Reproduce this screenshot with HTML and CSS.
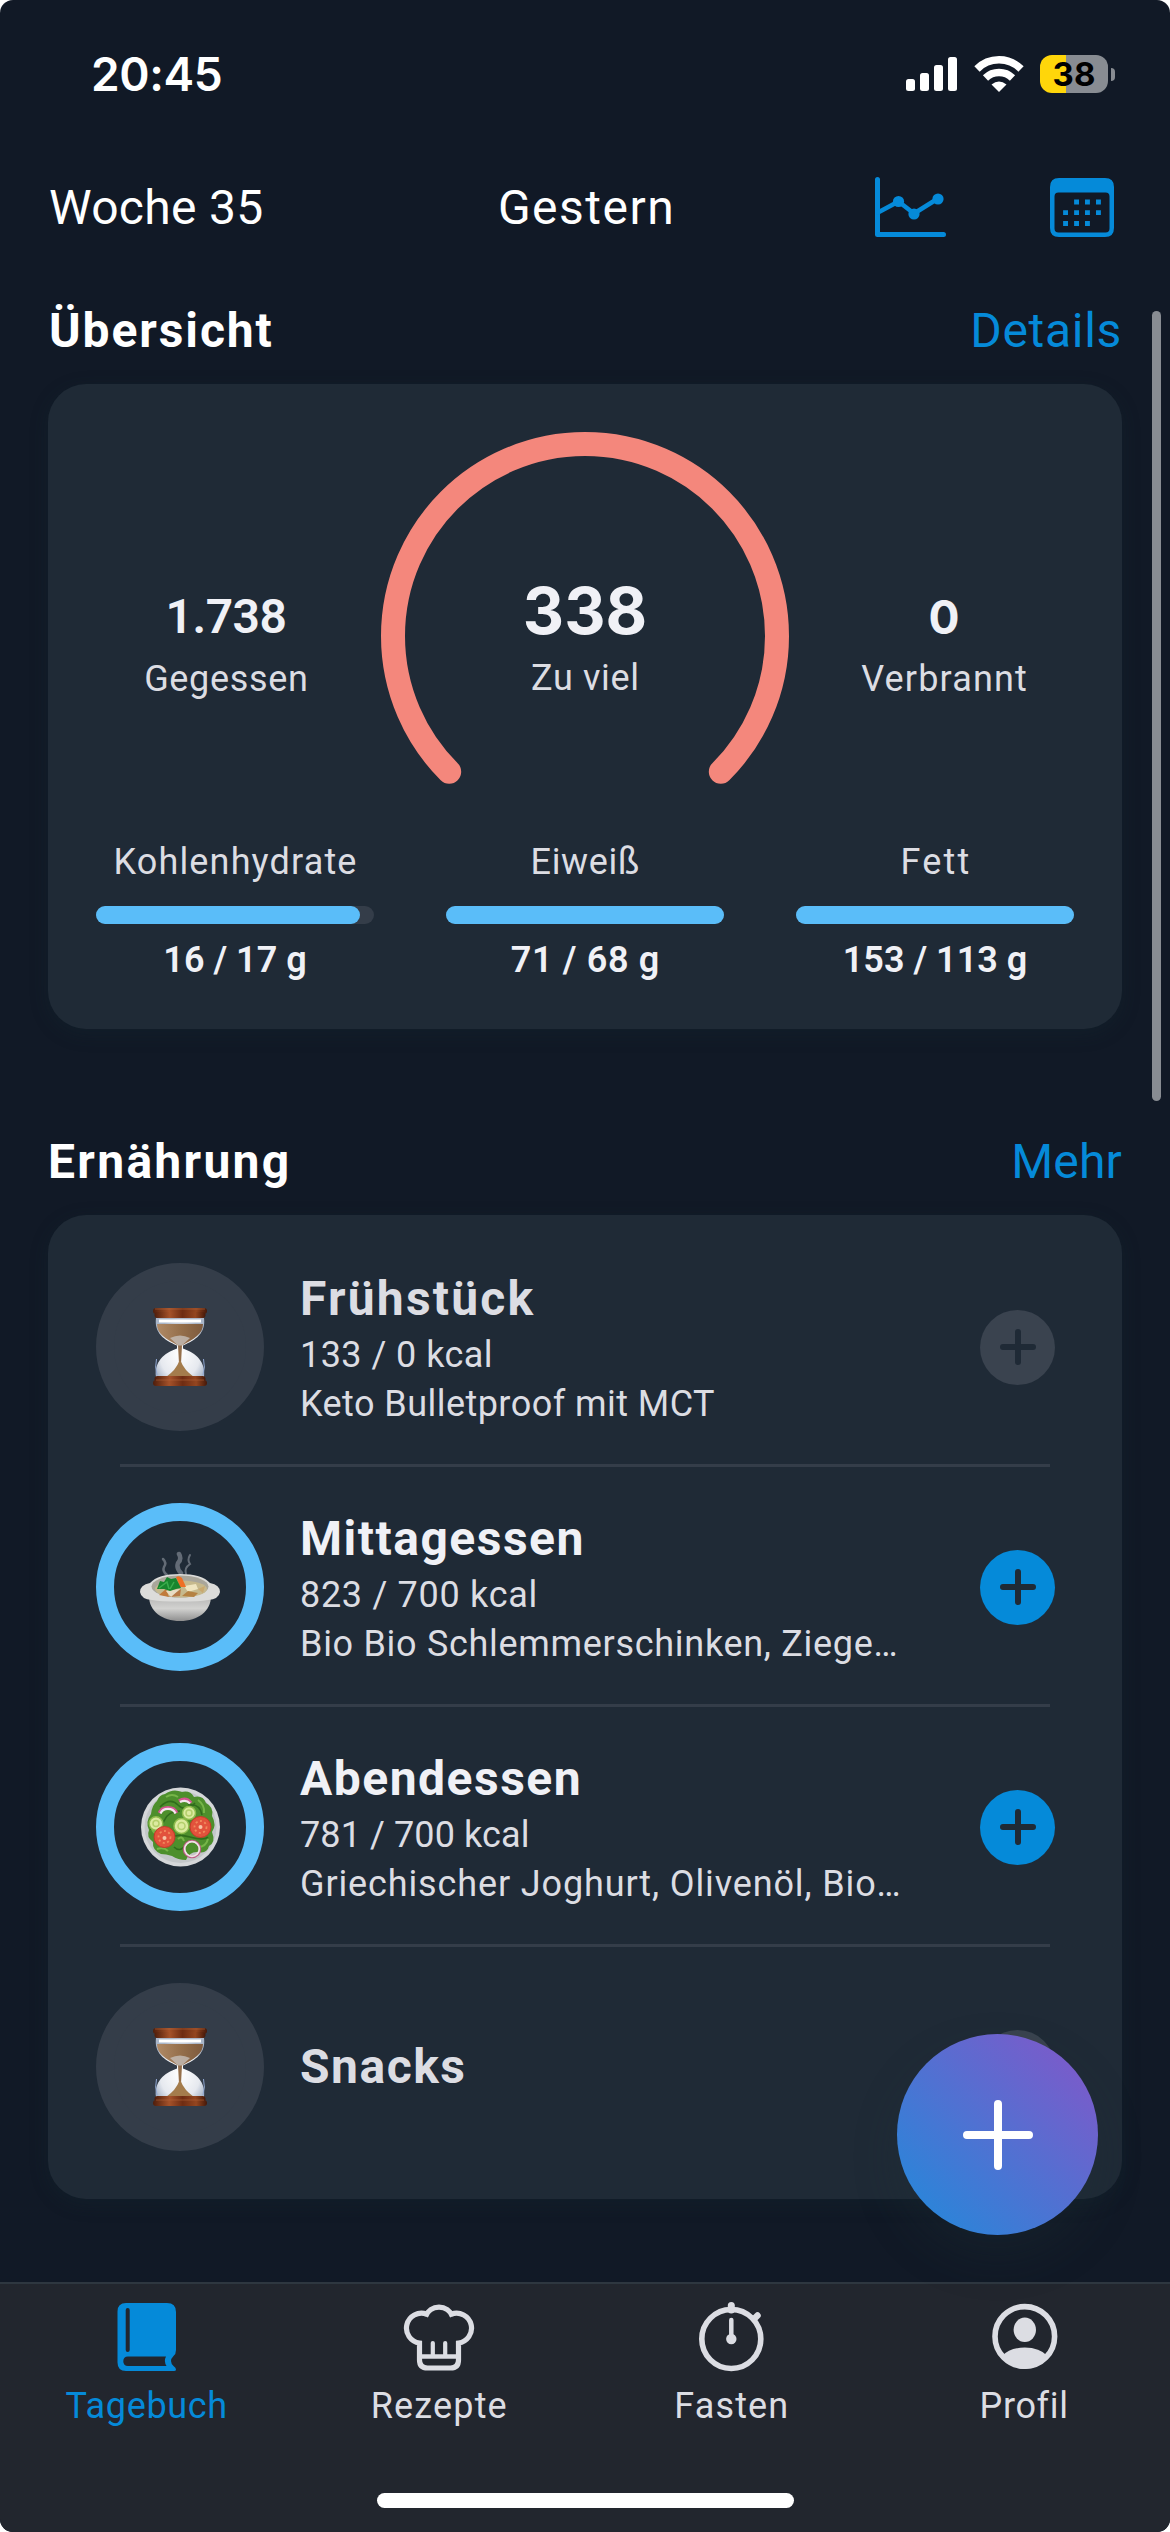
FILE: index.html
```html
<!DOCTYPE html>
<html lang="de">
<head>
<meta charset="utf-8">
<title>Tagebuch</title>
<link rel="stylesheet" href="styles.css">
</head>
<body>
<svg class="defs" width="0" height="0" aria-hidden="true">
  <defs>
    <linearGradient id="wood" x1="0" x2="1"><stop offset="0" stop-color="#4e1d0b"/><stop offset=".3" stop-color="#a5522a"/><stop offset=".55" stop-color="#6e2c12"/><stop offset=".8" stop-color="#944620"/><stop offset="1" stop-color="#451808"/></linearGradient>
    <radialGradient id="glass" cx=".5" cy=".6" r=".6"><stop offset="0" stop-color="#ffffff"/><stop offset=".7" stop-color="#e6e9ef"/><stop offset="1" stop-color="#a9b6c9"/></radialGradient>
    <linearGradient id="sand" x1="0" x2="1"><stop offset="0" stop-color="#b08a66"/><stop offset=".5" stop-color="#96704c"/><stop offset="1" stop-color="#7d5a3d"/></linearGradient>
    <linearGradient id="bowl" x1="0" x2="0" y1="0" y2="1"><stop offset="0" stop-color="#b5b5b4"/><stop offset=".5" stop-color="#d2d2d0"/><stop offset="1" stop-color="#8f8f8f"/></linearGradient>
    <symbol id="hourglass" viewBox="0 0 56 80">
      <path d="M4 11H52C54 26 44 33 31 38.500V41.500C44 46 54 55 52 70H4C2 55 12 46 25 41.500V38.500C12 33 2 26 4 11Z" fill="url(#glass)"/>
      <path d="M5 17H51C51 27 42 32 30 38.500L28.700 62H27.300L26 38.500C14 32 5 27 5 17Z" fill="url(#sand)"/>
      <path d="M18 31Q28 26 38 31L30 38.500H26Z" fill="#c9c4c0" opacity=".75"/>
      <path d="M14 70Q24 63 27.300 54H28.700Q32 63 42 70Z" fill="#a47c4c"/>
      <path d="M7 14H49" stroke="#fff" stroke-width="3"/>
      <path d="M4.500 52Q2.500 60 5 68M51.500 52Q53.500 60 51 68" fill="none" stroke="#8fa6d0" stroke-width="1"/>
      <rect x="1" y="1" width="54" height="6" rx="3" fill="url(#wood)"/>
      <rect x="2.500" y="5" width="51" height="6" rx="3" fill="url(#wood)"/>
      <rect x="2.500" y="69" width="51" height="6" rx="3" fill="url(#wood)"/>
      <rect x="1" y="73" width="54" height="6" rx="3" fill="url(#wood)"/>
      <path d="M3 2H53M4 73H52" stroke="#b96a40" stroke-width=".8" opacity=".7"/>
    </symbol>
    <symbol id="plus" viewBox="0 0 36 36"><path d="M18 3V33M3 18H33" fill="none" stroke="currentColor" stroke-width="6" stroke-linecap="round"/></symbol>
  </defs>
</svg>

<div class="phone">
  <div class="status">
    <span class="status__time">20:45</span>
    <span class="status__icons">
      <svg width="52" height="36" viewBox="0 0 52 36" fill="#fff"><rect x="0" y="23" width="9" height="12" rx="2.500"/><rect x="14" y="17" width="9" height="18" rx="2.500"/><rect x="28" y="9" width="9" height="26" rx="2.500"/><rect x="42" y="1" width="9" height="34" rx="2.500"/></svg>
      <svg width="50" height="37" viewBox="0 0 50 37" fill="none" stroke="#fff" stroke-width="7.500"><path d="M3 13A31 31 0 0 1 47 13"/><path d="M11.500 22A19.500 19.500 0 0 1 38.500 22"/><path d="M25 36L17.500 28.500Q25 22.500 32.500 28.500Z" fill="#fff" stroke="none"/></svg>
      <span class="battery"><span class="battery__body">38</span><span class="battery__nub"></span></span>
    </span>
  </div>

  <header class="nav">
    <span class="nav__week">Woche 35</span>
    <span class="track-m">Gestern</span>
    <span class="nav__icons">
      <svg width="72" height="62" viewBox="0 0 72 62" fill="none" stroke="currentColor" stroke-linecap="round" stroke-linejoin="round"><path d="M2.500 2.500V57.500H68.500" stroke-width="5"/><path d="M3 35.500L23.500 24.500L39 36.500L63 21.500" stroke-width="4.500"/><g fill="currentColor" stroke="none"><circle cx="23.500" cy="24.500" r="5.600"/><circle cx="39" cy="37" r="5.600"/><circle cx="63" cy="22" r="5.600"/></g></svg>
      <svg width="64" height="60" viewBox="0 0 64 60"><path fill="currentColor" fill-rule="evenodd" d="M9 1H55Q64 1 64 10V51Q64 60 55 60H9Q0 60 0 51V10Q0 1 9 1ZM8.500 15.500Q4.500 15.500 4.500 19.500V51.500Q4.500 55.500 8.500 55.500H55.500Q59.500 55.500 59.500 51.500V19.500Q59.500 15.500 55.500 15.500Z"/><path d="M26.500 25H26.600M37.400 25H37.500M48.400 25H48.500M15.500 35.700H15.600M26.500 35.700H26.600M37.400 35.700H37.500M48.400 35.700H48.500M15.500 46.500H15.600M26.500 46.500H26.600M37.400 46.500H37.500" stroke="currentColor" stroke-width="4.800" stroke-linecap="square"/></svg>
    </span>
  </header>

  <main>
    <div class="head"><h2>Übersicht</h2><a>Details</a></div>
    <section class="card overview">
      <div class="energy">
        <div class="stat"><b class="track-tight">1.738</b><span class="track-s">Gegessen</span></div>
        <div class="gauge">
          <svg width="408" height="352" viewBox="0 0 408 352"><path d="M68.200 339.800A192 192 0 1 1 339.800 339.800" fill="none" stroke="#f4877c" stroke-width="24" stroke-linecap="round"/></svg>
          <div class="stat stat--main"><b>338</b><span class="track-s">Zu viel</span></div>
        </div>
        <div class="stat stat--burned"><b>0</b><span class="track-m">Verbrannt</span></div>
      </div>
      <div class="macros">
        <div class="macro"><span class="track-m">Kohlenhydrate</span><div class="bar"><div class="bar__fill" style="width:95%"></div></div><b>16 / 17 g</b></div>
        <div class="macro"><span class="track-s">Eiweiß</span><div class="bar"><div class="bar__fill" style="width:100%"></div></div><b class="track-s">71 / 68 g</b></div>
        <div class="macro"><span class="track-l">Fett</span><div class="bar"><div class="bar__fill" style="width:100%"></div></div><b>153 / 113 g</b></div>
      </div>
    </section>

    <div class="head head--next"><h2>Ernährung</h2><a>Mehr</a></div>
    <section class="card meals">
      <article class="meal meal--off">
        <div class="meal__icon"><svg width="56" height="80"><use href="#hourglass"/></svg></div>
        <div class="meal__text"><h3>Frühstück</h3><p>133 / 0 kcal</p><p>Keto Bulletproof mit MCT</p></div>
        <div class="add"><svg width="36" height="36"><use href="#plus"/></svg></div>
      </article>
      <article class="meal">
        <div class="meal__icon">
          <svg width="80" height="72" viewBox="0 0 80 72">
            <g fill="none" stroke="#c9ced6" stroke-linecap="round" opacity=".4"><path d="M23 8Q27 12 24 16Q22 20 27 24" stroke-width="2.500"/><path d="M39 3Q42 8 38 12Q36 17 41 22" stroke-width="4.500"/><path d="M50 4Q47 9 50 13Q44 17 46 23" stroke-width="2"/></g>
            <path d="M9 45H71C71 60 58 70 40 70S9 60 9 45Z" fill="url(#bowl)"/>
            <path d="M10 32Q18 23 40 23T70 32Q80 34 80 41Q79 48 68 49Q60 50.500 40 50.500T12 49Q1 48 0 41Q0 34 10 32Z" fill="#dcdcda"/>
            <ellipse cx="40" cy="35.500" rx="28.500" ry="11" fill="#a9a69b"/>
            <ellipse cx="41" cy="38" rx="26" ry="8.500" fill="#c6b98d"/>
            <path d="M44 35L56 33L58 38L48 41Z" fill="#efe5c0"/><path d="M19 44L26 38L29 46Z" fill="#c07a3a"/><path d="M29 46L41 38L40 45Z" fill="#b77a47"/><path d="M26 40L40 38L31 46Z" fill="#e8dcc4"/><path d="M42 45L48 40L58 42L54 46Z" fill="#b58243"/><path d="M58 38L65 35L63 42Z" fill="#c9a970"/>
            <path d="M36 26Q39 24 42 27L46 36H40Z" fill="#ee6f25"/>
            <path d="M17 38L20 30L24 31L27 26L31 28L36 27L41 37L36 38L30 40L24 38Z" fill="#17852e"/><path d="M19 37L27 31L29 38M30 38L34 31" fill="none" stroke="#3aad4d" stroke-width="1.500"/>
          </svg>
        </div>
        <div class="meal__text"><h3 class="track-title-s">Mittagessen</h3><p>823 / 700 kcal</p><p>Bio Bio Schlemmerschinken, Ziege…</p></div>
        <div class="add"><svg width="36" height="36"><use href="#plus"/></svg></div>
      </article>
      <article class="meal">
        <div class="meal__icon">
          <svg width="80" height="80" viewBox="0 0 80 80">
            <circle cx="40.500" cy="40" r="39.500" fill="#d5d7d9"/><circle cx="40.500" cy="40" r="36" fill="#c3c7c9"/>
            <path d="M25 7Q33 1 42 5Q50 3 54 10Q63 8 66 16Q74 20 72 29Q77 38 72 45Q76 55 69 59Q67 67 58 65Q50 64 46 73Q38 73 32 69Q26 67 21 67Q12 63 13 55Q6 50 9 43Q5 35 11 27Q12 18 17 14Q19 8 25 7Z" fill="#4d8f2c"/>
            <g fill="none" stroke="#2f6c1c" stroke-width="1.600"><path d="M20 20Q30 10 38 18T55 16M48 18Q60 16 62 28M10 42Q20 44 24 34T40 24M30 52Q36 46 50 50T68 50M34 60Q40 66 46 58M55 44Q62 54 70 42"/></g>
            <g fill="none" stroke="#76b548" stroke-width="2"><path d="M26 10Q32 6 38 10M58 13Q65 18 64 26M10 36Q12 46 18 48M17 62Q24 60 28 64M38 52Q42 48 44 54M58 60Q66 60 68 52"/></g>
            <path d="M19.500 26A9 8 0 0 1 36.500 26M39 14Q46 10 51 16" fill="none" stroke="#d35591" stroke-width="3.500"/><path d="M20.500 26.500A8 7 0 0 1 35.500 26.500M40 15Q46 12 50 16.500" fill="none" stroke="#f3e8ef" stroke-width="2.200"/>
            <circle cx="52" cy="62" r="8" fill="none" stroke="#bf5c86" stroke-width="2.500"/><circle cx="52" cy="62" r="7.300" fill="none" stroke="#eee6e6" stroke-width="1.700"/>
            <g fill="#dceba0" stroke="#8dbb4c" stroke-width="1.500"><circle cx="49" cy="26" r="6.500"/><circle cx="16" cy="36.500" r="6.800"/><circle cx="41.500" cy="39" r="7.500"/></g>
            <g fill="none" stroke="#b4cf6c" stroke-width="1.500"><circle cx="16" cy="36.500" r="3"/><circle cx="41.500" cy="39" r="3.500"/><circle cx="49" cy="26" r="3"/></g>
            <g fill="#e2523c" stroke="#c43a2a" stroke-width="1"><circle cx="24.500" cy="50" r="10.500"/><circle cx="60.500" cy="40" r="10.500"/></g>
            <g fill="none" stroke="#f08a5c" stroke-width="1.800" stroke-dasharray="2 2.500"><circle cx="24.500" cy="50" r="6"/><circle cx="60.500" cy="40" r="6"/></g>
            <circle cx="24.500" cy="51" r="2" fill="#f6c3a4"/><circle cx="60.500" cy="40" r="2" fill="#f6c3a4"/>
          </svg>
        </div>
        <div class="meal__text"><h3 class="track-title-s">Abendessen</h3><p class="track-none">781 / 700 kcal</p><p class="track-s">Griechischer Joghurt, Olivenöl, Bio…</p></div>
        <div class="add"><svg width="36" height="36"><use href="#plus"/></svg></div>
      </article>
      <article class="meal meal--off">
        <div class="meal__icon"><svg width="56" height="80"><use href="#hourglass"/></svg></div>
        <div class="meal__text meal__text--single"><h3 class="track-title-s">Snacks</h3></div>
        <div class="add"><svg width="36" height="36"><use href="#plus"/></svg></div>
      </article>
    </section>
  </main>

  <nav class="tabs">
    <a class="tab tab--active"><svg width="72" height="72" viewBox="0 0 72 72"><path fill="currentColor" fill-rule="evenodd" d="M16 2H57Q66 2 66 11V49Q66 53 63.500 55Q58.500 60 63.500 65Q66 66.500 66 68.500Q66 70 64 70H16Q7.500 70 7.500 61.500V10.500Q7.500 2 16 2ZM17.700 7Q15.700 7 15.700 9V49Q15.700 51 17.700 51Q19.700 51 19.700 49V9Q19.700 7 17.700 7ZM18 55.500Q13.300 55.500 13.300 60.200Q13.300 65 18 65H56.500Q53.500 60 56 55.500Z"/></svg><span class="track-s">Tagebuch</span></a>
    <a class="tab"><svg width="72" height="72" viewBox="0 0 72 72" fill="none" stroke="currentColor" stroke-width="5.200"><path d="M22.500 15.500A14.400 14.400 0 0 1 49.500 15.500"/><path d="M23.500 13A15 15 0 1 0 16.500 42V59Q16.500 67 24.500 67H47.500Q55.500 67 55.500 59V42A15 15 0 1 0 48.500 13"/><path d="M16.500 55.500H55.500" stroke-width="4.500"/><path d="M29.800 42V55M42.200 42V55" stroke-width="4.200" stroke-linecap="round"/></svg><span class="track-m">Rezepte</span></a>
    <a class="tab"><svg width="72" height="72" viewBox="0 0 72 72" fill="none" stroke="currentColor" stroke-linecap="round"><circle cx="36.300" cy="38" r="29.500" stroke-width="5.600"/><path d="M36.300 4.500V9" stroke-width="7"/><path d="M60 17L62.500 14.500" stroke-width="6.500"/><path d="M36.300 19V38" stroke-width="4.500"/><circle cx="36.300" cy="38" r="5.200" fill="currentColor" stroke="none"/></svg><span class="track-m">Fasten</span></a>
    <a class="tab"><svg width="72" height="72" viewBox="0 0 72 72"><circle cx="36.800" cy="35.400" r="29.800" fill="none" stroke="currentColor" stroke-width="5.600"/><ellipse cx="36.800" cy="28.800" rx="11.200" ry="12.200" fill="currentColor"/><path fill="currentColor" d="M14 55Q22 46.500 36.800 46.500T59.600 55Q50 68 36.800 68T14 55Z"/></svg><span class="track-s">Profil</span></a>
    <div class="home"></div>
  </nav>

  <div class="fab"><svg width="72" height="72" viewBox="0 0 72 72"><path d="M36 5V67M5 36H67" fill="none" stroke="#fff" stroke-width="8" stroke-linecap="round"/></svg></div>
  <div class="scrollbar"></div>
</div>
</body>
</html>
```
FILE: styles.css
```css
* { box-sizing: border-box; }
body { margin: 0; background: #fff; font-family: Roboto, "Liberation Sans", sans-serif; font-size: 36px; line-height: 44px; color: #dcdde3; }
h2, h3, p { margin: 0; font-size: inherit; font-weight: inherit; }
svg { display: block; flex: none; }
.defs { position: absolute; }

.phone { position: relative; display: flex; flex-direction: column; width: 1170px; height: 2532px; background: #111926; border-radius: 13px; overflow: hidden; }

.status { display: flex; align-items: center; justify-content: space-between; height: 148px; padding: 0 55px 0 91px; }
.status__time { font-family: Inter, sans-serif; font-size: 46px; font-weight: 600; letter-spacing: -.4px; color: #fff; }
.status__icons { display: flex; align-items: center; gap: 16px; }
.battery { display: flex; align-items: center; gap: 3px; }
.battery__body { width: 68px; height: 38px; border-radius: 12px; background: linear-gradient(90deg, #ffd60a 26px, #888c92 26px); color: #000; font-family: Inter, sans-serif; font-size: 33px; font-weight: 650; line-height: 38px; text-align: center; }
.battery__nub { width: 4px; height: 13px; border-radius: 0 4px 4px 0; background: #888c92; }

.nav { display: grid; grid-template-columns: 1fr auto 1fr; align-items: center; height: 120px; padding: 0 56px 0 58px; font-size: 48px; color: #fff; }
.nav__week { margin-left: -9px; letter-spacing: .3px; }
.nav__icons { display: flex; justify-content: flex-end; gap: 103px; color: #058ad9; }

.head { display: flex; align-items: center; justify-content: space-between; height: 116px; padding: 10px 48px 0 49px; font-size: 48px; }
.head--next { margin-top: 70px; padding-left: 48px; }
.head h2 { font-weight: 700; letter-spacing: 1.900px; color: #fff; }
.head--next h2 { letter-spacing: 2.300px; }
.head a { letter-spacing: .7px; color: #058ad9; }
.head--next a { letter-spacing: .2px; }

/* letter-spacing steps; the negative margin keeps centred labels centred */
.track-none.track-none { letter-spacing: .1px; }
.track-tight { letter-spacing: -.5px; }
.track-s { letter-spacing: .65px; margin-right: -.65px; }
.track-m { letter-spacing: 1.150px; margin-right: -1.150px; }
.track-l { letter-spacing: 2.200px; margin-right: -2.200px; }
.nav .track-m { letter-spacing: 1.500px; }
.meal p.track-s { letter-spacing: .870px; }

.card { margin: 0 48px; border-radius: 38px; background: #1f2a36; box-shadow: 0 5px 18px rgba(20, 42, 50, .3); }
.overview { padding: 48px 48px 47px; }
.energy { display: grid; grid-template-columns: 260px 458px 260px; height: 352px; }
.stat { display: flex; flex-direction: column; align-items: center; gap: 10px; padding-top: 154.600px; }
.stat b { font-size: 48px; font-weight: 650; line-height: 60px; color: #f0f1f6; }
.gauge { display: grid; justify-items: center; }
.gauge > * { grid-area: 1 / 1; }
.stat--main { padding-top: 144.400px; }
.stat--main b { font-family: Inter, sans-serif; font-size: 64px; font-weight: 700; line-height: 70px; }
.stat--burned b { font-family: Inter, sans-serif; font-size: 46px; }

.macros { display: grid; grid-template-columns: repeat(3, 1fr); gap: 72px; margin-top: 56px; }
.macro { display: flex; flex-direction: column; align-items: center; }
.bar { width: 100%; height: 18px; margin: 22px 0 14px; border-radius: 9px; background: #343d49; }
.bar__fill { height: 100%; border-radius: 9px; background: #5abdf9; }
.macro b { font-weight: 600; color: #f0f1f6; }

.meals { padding: 48px; }
.meal { display: flex; align-items: center; position: relative; padding-right: 19px; }
.meal + .meal { margin-top: 72px; }
.meal + .meal::before { content: ""; position: absolute; left: 24px; right: 24px; top: -39px; height: 3px; background: #343d49; }
.meal__icon { display: flex; align-items: center; justify-content: center; flex: none; width: 168px; height: 168px; border: 18px solid #5abdf9; border-radius: 50%; }
.meal--off .meal__icon { border-color: #343d49; background: #343d49; }
.meal__text { flex: 1; min-width: 0; margin-left: 36px; padding-top: 5px; line-height: 49px; white-space: nowrap; }
.meal__text--single { padding-top: 0; }
.meal__text h3 { font-size: 48px; font-weight: 700; line-height: 56px; letter-spacing: 2.200px; color: #f0f1f6; }
.meal__text h3.track-title-s { letter-spacing: 1.500px; }
.meal__text p { letter-spacing: .7px; }
.meal--off p { letter-spacing: .450px; }
.meal__text p:nth-child(2) { margin-top: 4px; }
.meal--off .meal__text h3 { color: #dcdde3; }
.add { display: flex; align-items: center; justify-content: center; width: 75px; height: 75px; border-radius: 50%; background: #058ad9; color: #1f2a36; }
.meal--off .add { background: #3a434f; }

.tabs { display: grid; grid-template-columns: repeat(4, 1fr); align-content: start; justify-items: center; height: 250px; margin-top: auto; padding-top: 17px; border-top: 2px solid #2e3740; background: #22262e; }
.tab { display: flex; flex-direction: column; align-items: center; gap: 11px; }
.tab--active { color: #058ad9; }
.home { grid-column: 1 / -1; width: 417px; height: 15px; margin-top: 65px; border-radius: 8px; background: #fff; }

.fab { position: absolute; left: 897px; top: 2034px; display: flex; align-items: center; justify-content: center; width: 201px; height: 201px; border-radius: 50%; background: linear-gradient(45deg, #1f8bdb, #8655c8); box-shadow: 0 22px 44px rgba(31, 50, 56, .25); }
.scrollbar { position: absolute; left: 1152px; top: 311px; width: 9px; height: 790px; border-radius: 5px; background: #888c92; }
```
